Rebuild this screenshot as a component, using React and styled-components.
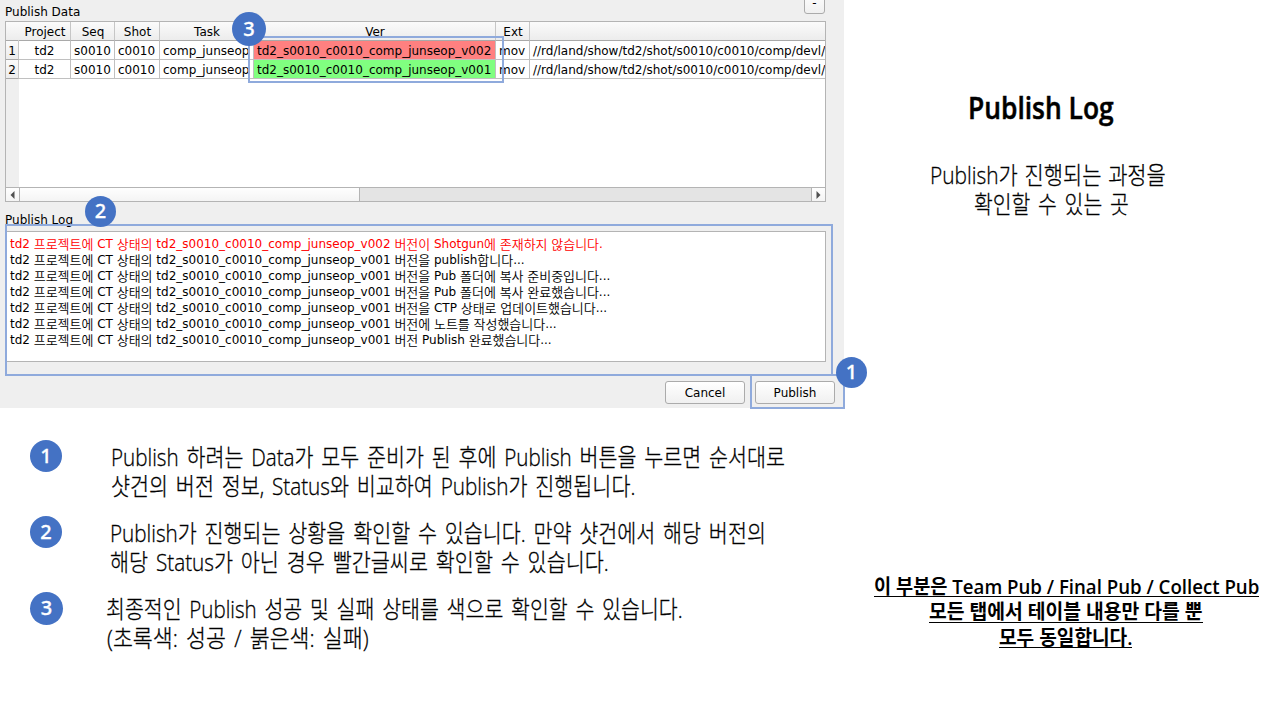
import React, { useLayoutEffect, useRef, useState } from "react";
import styled, { createGlobalStyle } from "styled-components";

const GlobalStyle = createGlobalStyle`
  *, *::before, *::after { box-sizing: border-box; }
  body { margin: 0; background: #fff; color: #000; overflow: hidden; }
`;

const uiFont = `"DejaVu Sans", "Noto Sans CJK KR", sans-serif`;
const slideFont = `"Open Sans", "Noto Sans CJK KR", sans-serif`;

const Slide = styled.main`
  width: 1280px;
  height: 720px;
  display: grid;
  grid-template-columns: 844px 1fr;
  background: #fff;
`;

const Main = styled.section`
  display: flex;
  flex-direction: column;
`;

/* ---------- application window ---------- */

const Window = styled.div`
  position: relative;
  height: 408px;
  padding: 3px 0 0 5px;
  background: #efefef;
  font: 12px/18px ${uiFont};
  white-space: nowrap;
`;

const Label = styled.div`
  height: 18px;
  line-height: 18px;
`;

const TableFrame = styled.div`
  width: 821px;
  height: 181px;
  border: 1px solid #b4b4b4;
  display: flex;
  flex-direction: column;
  background: #fff;
  overflow: hidden;
`;

const TableArea = styled.div`
  flex: 1;
  background: linear-gradient(to right, #efefef 13px, #fff 13px);
`;

const Row = styled.div`
  display: grid;
  grid-template-columns: 13px 52px 44px 45px 94px 242px 34px 295px;
  height: 19px;
`;

const Cell = styled.div`
  border-right: 1px solid ${(p) => (p.$head ? "#c6c6c6" : "#c0c0c0")};
  border-bottom: 1px solid ${(p) => (p.$head ? "#a9a9a9" : "#c0c0c0")};
  background: ${(p) => (p.$head ? "linear-gradient(#fbfbfb, #ececec)" : p.$fill || "#fff")};
  padding-left: ${(p) => (p.$center ? 0 : "3px")};
  text-align: ${(p) => (p.$center ? "center" : "left")};
  line-height: 20px;
  overflow: hidden;
  &:last-child { border-right: 0; }
`;

const HeadCell = styled(Cell)`
  padding-left: 1px;
  &:first-child { border-right-color: transparent; }
`;

const ScrollBar = styled.div`
  display: grid;
  grid-template-columns: 14px 340px 1fr 14px;
  height: 14px;
  border-top: 1px solid #b4b4b4;
  background: #e4e4e4;
`;

const ScrollPart = styled.div`
  display: flex;
  align-items: center;
  justify-content: center;
  background: linear-gradient(#fefefe, #f4f4f4);
  border-right: ${(p) => (p.$side === "right" ? "0" : "1px solid #b4b4b4")};
  border-left: ${(p) => (p.$side === "right" ? "1px solid #b4b4b4" : "0")};
`;

const LogLabel = styled(Label)`
  margin-top: 9px;
`;

const LogBox = styled.div`
  width: 821px;
  height: 131px;
  margin-top: 2px;
  padding: 4px 4px;
  border: 1px solid #b4b4b4;
  background: #fff;
`;

const LogLine = styled.div`
  height: 16px;
  line-height: 16px;
  color: ${(p) => (p.$error ? "#f00" : "#000")};
`;

const Hangul = styled.span`
  font-size: 13px;
  font-weight: 350;
  line-height: 1;
  letter-spacing: -0.04px;
  vertical-align: -1px;
`;

const Actions = styled.div`
  display: flex;
  gap: 10px;
  justify-content: flex-end;
  padding: 19px 9px 0 0;
`;

const Button = styled.button`
  width: 80px;
  height: 23px;
  padding: 1px 0 0;
  border: 1px solid #ababab;
  border-radius: 3px;
  background: linear-gradient(#fff, #f0f0f0);
  font: 12px/21px ${uiFont};
  color: #000;
`;

const CollapseButton = styled(Button)`
  position: absolute;
  left: 804px;
  top: -9px;
  width: 21px;
`;

const Outline = styled.div`
  position: absolute;
  left: ${(p) => p.$x}px;
  top: ${(p) => p.$y}px;
  width: ${(p) => p.$w}px;
  height: ${(p) => p.$h}px;
  border: 2px solid #8faadc;
`;

const Badge = styled.div`
  flex: none;
  width: ${(p) => p.$size}px;
  height: ${(p) => p.$size}px;
  border-radius: 50%;
  background: #4472c4;
  color: #fff;
  font: 500 20px/${(p) => p.$size - 1}px "Noto Sans", sans-serif;
  -webkit-text-stroke: 0.3px #fff;
  text-align: center;
`;

const PinnedBadge = styled(Badge)`
  position: absolute;
  left: ${(p) => p.$x}px;
  top: ${(p) => p.$y}px;
`;

/* ---------- slide text ---------- */

const Notes = styled.div`
  display: flex;
  flex-direction: column;
  padding: 32px 0 0 30px;
`;

const Note = styled.div`
  display: flex;
  height: 76px;
`;

const NoteText = styled.div`
  margin-left: ${(p) => p.$gap}px;
  padding-top: 2px;
`;

const Side = styled.aside`
  display: flex;
  flex-direction: column;
  align-items: flex-start;
`;

const Centered = styled.div`
  display: flex;
  flex-direction: column;
  align-items: center;
  width: ${(p) => p.$w}px;
  margin: ${(p) => p.$top}px 0 0 ${(p) => p.$left}px;
`;

const FitBox = styled.div`
  width: ${(p) => p.$w}px;
  height: ${(p) => p.$line}px;
  line-height: ${(p) => p.$line + (p.$underline ? 4 : 0)}px;
  margin-left: ${(p) => p.$shift || 0}px;
  font-family: ${slideFont};
  font-size: ${(p) => p.$size}px;
  font-weight: ${(p) => p.$weight};
  -webkit-text-stroke: ${(p) => p.$stroke}px #000;
  word-spacing: ${(p) => p.$space}px;
  white-space: nowrap;
  border-bottom: ${(p) => (p.$underline ? "1px solid #000" : "0")};
`;

const FitInner = styled.span`
  display: inline-block;
  transform-origin: 0 50%;
`;

function FitLine({ w, size = 24, line = 29, weight = 300, stroke = 0.3, space = 2.8, shift, underline, children }) {
  const ref = useRef(null);
  const [scale, setScale] = useState(1);
  useLayoutEffect(() => {
    setScale(w / ref.current.offsetWidth);
  }, [w]);
  return (
    <FitBox $w={w} $size={size} $line={line} $weight={weight} $stroke={stroke} $space={space} $shift={shift} $underline={underline}>
      <FitInner ref={ref} style={{ transform: `scaleX(${scale})` }}>{children}</FitInner>
    </FitBox>
  );
}

const columns = ["", "Project", "Seq", "Shot", "Task", "Ver", "Ext", ""];
const path = "//rd/land/show/td2/shot/s0010/c0010/comp/devl/";
const rows = [
  { id: 1, ver: "td2_s0010_c0010_comp_junseop_v002", fill: "#ff8080" },
  { id: 2, ver: "td2_s0010_c0010_comp_junseop_v001", fill: "#80ff80" },
];

const prefix = "td2 프로젝트에 CT 상태의 td2_s0010_c0010_comp_junseop_";
const log = [
  "v002 버전이 Shotgun에 존재하지 않습니다.",
  "v001 버전을 publish합니다...",
  "v001 버전을 Pub 폴더에 복사 준비중입니다...",
  "v001 버전을 Pub 폴더에 복사 완료했습니다...",
  "v001 버전을 CTP 상태로 업데이트했습니다...",
  "v001 버전에 노트를 작성했습니다...",
  "v001 버전 Publish 완료했습니다...",
];

const notes = [
  { badge: 32, gap: 49, lines: [
    ["Publish 하려는 Data가 모두 준비가 된 후에 Publish 버튼을 누르면 순서대로", 674],
    ["샷건의 버전 정보, Status와 비교하여 Publish가 진행됩니다.", 524],
  ] },
  { badge: 32, gap: 48, lines: [
    ["Publish가 진행되는 상황을 확인할 수 있습니다. 만약 샷건에서 해당 버전의", 656],
    ["해당 Status가 아닌 경우 빨간글씨로 확인할 수 있습니다.", 499],
  ] },
  { badge: 33, gap: 43, lines: [
    ["최종적인 Publish 성공 및 실패 상태를 색으로 확인할 수 있습니다.", 577],
    ["(초록색: 성공 / 붉은색: 실패)", 262, 1],
  ] },
];

const mixed = (text) =>
  text.split(/([가-힣]+)/).map((t, i) => (i % 2 ? <Hangul key={i}>{t}</Hangul> : t));

function Arrow({ right }) {
  return (
    <svg width="5" height="8" viewBox="0 0 5 8">
      <path d={right ? "M0.5 0L4.5 4L0.5 8Z" : "M4.5 0L0.5 4L4.5 8Z"} fill="#505050" />
    </svg>
  );
}

function DataTable() {
  return (
    <TableFrame>
      <TableArea>
        <Row>{columns.map((c, i) => <HeadCell key={i} $head $center>{c}</HeadCell>)}</Row>
        {rows.map((r) => (
          <Row key={r.id}>
            <Cell $head $center>{r.id}</Cell>
            <Cell $center>td2</Cell>
            <Cell>s0010</Cell>
            <Cell>c0010</Cell>
            <Cell>comp_junseop</Cell>
            <Cell $fill={r.fill}>{r.ver}</Cell>
            <Cell>mov</Cell>
            <Cell>{path}</Cell>
          </Row>
        ))}
      </TableArea>
      <ScrollBar>
        <ScrollPart><Arrow /></ScrollPart>
        <ScrollPart />
        <div />
        <ScrollPart $side="right"><Arrow right /></ScrollPart>
      </ScrollBar>
    </TableFrame>
  );
}

export default function App() {
  return (
    <>
      <GlobalStyle />
      <Slide>
        <Main>
          <Window>
            <Label>Publish Data</Label>
            <DataTable />
            <LogLabel>Publish Log</LogLabel>
            <LogBox>
              {log.map((l, i) => <LogLine key={i} $error={i === 0}>{mixed(prefix + l)}</LogLine>)}
            </LogBox>
            <Actions>
              <Button>Cancel</Button>
              <Button>Publish</Button>
            </Actions>
            <CollapseButton>-</CollapseButton>
            <Outline $x={248} $y={36} $w={256} $h={47} />
            <Outline $x={5} $y={224} $w={828} $h={152} />
            <Outline $x={750} $y={374} $w={95} $h={35} />
            <PinnedBadge $x={232} $y={12} $size={34}>3</PinnedBadge>
            <PinnedBadge $x={85} $y={196} $size={31}>2</PinnedBadge>
            <PinnedBadge $x={836} $y={357} $size={31}>1</PinnedBadge>
          </Window>
          <Notes>
            {notes.map((n, i) => (
              <Note key={i}>
                <Badge $size={n.badge}>{i + 1}</Badge>
                <NoteText $gap={n.gap}>
                  {n.lines.map(([t, w, shift]) => <FitLine key={t} w={w} shift={shift}>{t}</FitLine>)}
                </NoteText>
              </Note>
            ))}
          </Notes>
        </Main>
        <Side>
          <Centered $w={146} $top={88} $left={124}>
            <FitLine w={146} size={30} line={40} weight={600} stroke={0.5} space={0}>Publish Log</FitLine>
          </Centered>
          <Centered $w={236} $top={32} $left={86}>
            <FitLine w={236} space={1.5}>Publish가 진행되는 과정을</FitLine>
            <FitLine w={155} shift={7}>확인할 수 있는 곳</FitLine>
          </Centered>
          <Centered $w={386} $top={354} $left={29}>
            <FitLine w={385} size={20} line={25} weight={600} stroke={0} space={0} underline>이 부분은 Team Pub / Final Pub / Collect Pub</FitLine>
            <FitLine w={274} size={20} line={26} weight={600} stroke={0} space={0} shift={-1} underline>모든 탭에서 테이블 내용만 다를 뿐</FitLine>
            <FitLine w={133} size={20} line={25} weight={600} stroke={0} space={0} shift={-2} underline>모두 동일합니다.</FitLine>
          </Centered>
        </Side>
      </Slide>
    </>
  );
}
